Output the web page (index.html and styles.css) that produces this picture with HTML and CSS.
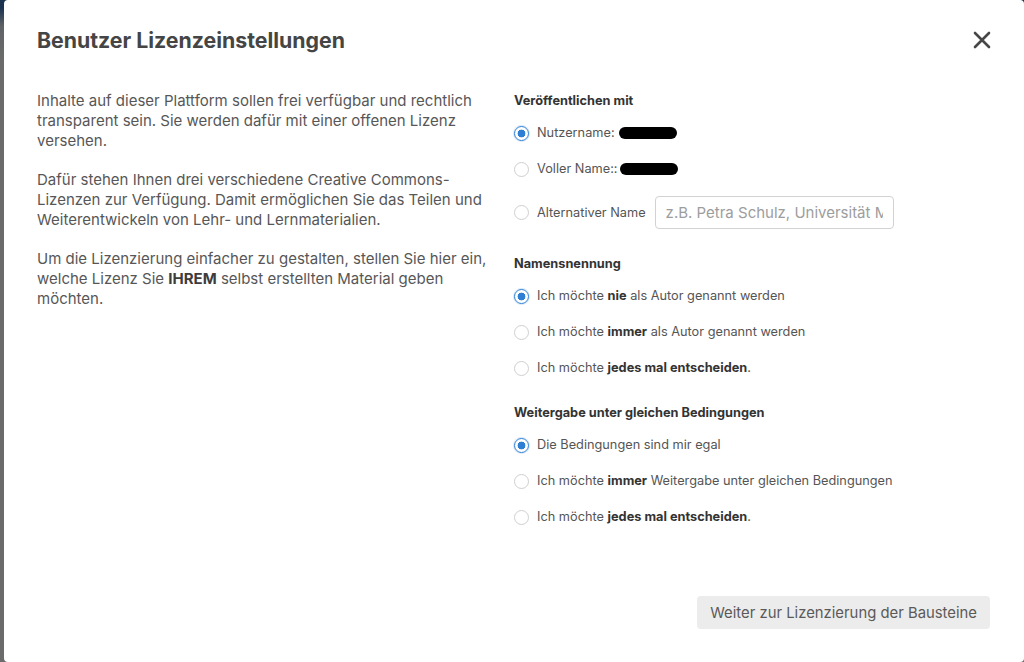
FILE: index.html
```html
<!DOCTYPE html>
<html lang="de">
<head>
<meta charset="utf-8">
<title>Benutzer Lizenzeinstellungen</title>
<link rel="stylesheet" href="styles.css">
</head>
<body>
<div class="modal">
  <header class="modal-header">
    <h1 class="modal-title">Benutzer Lizenzeinstellungen</h1>
    <button class="close-btn" aria-label="Schließen">
      <svg width="18" height="18" viewBox="0 0 18 18"><path d="M2 2 L16 16 M16 2 L2 16" stroke="#474747" stroke-width="2.6" stroke-linecap="round" fill="none"/></svg>
    </button>
  </header>
  <main class="modal-body">
    <section class="intro">
      <p>Inhalte auf dieser Plattform sollen frei verfügbar und rechtlich transparent sein. Sie werden dafür mit einer offenen Lizenz versehen.</p>
      <p>Dafür stehen Ihnen drei verschiedene Creative Commons-Lizenzen zur Verfügung. Damit ermöglichen Sie das Teilen und Weiterentwickeln von Lehr- und Lernmaterialien.</p>
      <p>Um die Lizenzierung einfacher zu gestalten, stellen Sie hier ein, welche Lizenz Sie <b>IHREM</b> selbst erstellten Material geben möchten.</p>
    </section>
    <section class="settings">
      <div class="group">
        <div class="group-title">Veröffentlichen mit</div>
        <label class="opt"><input type="radio" name="pub" checked><span>Nutzername:</span><span class="redact"></span></label>
        <label class="opt"><input type="radio" name="pub"><span>Voller Name::</span><span class="redact redact-2"></span></label>
        <label class="opt opt-input"><input type="radio" name="pub"><span>Alternativer Name</span><input class="text-input" type="text" placeholder="z.B. Petra Schulz, Universität Musterstadt"></label>
      </div>
      <div class="group">
        <div class="group-title">Namensnennung</div>
        <label class="opt"><input type="radio" name="by" checked><span>Ich möchte <b>nie</b> als Autor genannt werden</span></label>
        <label class="opt"><input type="radio" name="by"><span>Ich möchte <b>immer</b> als Autor genannt werden</span></label>
        <label class="opt"><input type="radio" name="by"><span>Ich möchte <b>jedes mal entscheiden</b>.</span></label>
      </div>
      <div class="group group-last">
        <div class="group-title">Weitergabe unter gleichen Bedingungen</div>
        <label class="opt"><input type="radio" name="sa" checked><span>Die Bedingungen sind mir egal</span></label>
        <label class="opt"><input type="radio" name="sa"><span>Ich möchte <b>immer</b> Weitergabe unter gleichen Bedingungen</span></label>
        <label class="opt"><input type="radio" name="sa"><span>Ich möchte <b>jedes mal entscheiden</b>.</span></label>
      </div>
    </section>
  </main>
  <footer class="modal-footer">
    <button class="next-btn">Weiter zur Lizenzierung der Bausteine</button>
  </footer>
</div>
</body>
</html>
```

FILE: styles.css
```css
* { box-sizing: border-box; }
html, body { height: 100%; }
body {
  margin: 0;
  background: linear-gradient(to bottom, #1c3350 0, #1c3350 8px, #5f6266 26px, #6b6b6b 60px, #6b6b6b 100%);
  font-family: Inter, "Noto Sans", "Liberation Sans", sans-serif;
  overflow: hidden;
}
.modal {
  margin-left: 4px;
  height: 662px;
  background: #fff;
  border-radius: 4px;
  display: flex;
  flex-direction: column;
}
.modal-header {
  height: 80px;
  display: flex;
  align-items: center;
  justify-content: space-between;
  padding: 0 33px 0 33px;
}
.modal-title {
  margin: 0;
  font-size: 21.3px;
  font-weight: 700;
  color: #454545;
}
.close-btn {
  background: none;
  border: 0;
  padding: 0;
  width: 18px;
  height: 18px;
  display: flex;
  cursor: pointer;
}
.modal-body {
  flex: 1;
  display: grid;
  grid-template-columns: 460px 1fr;
  column-gap: 17px;
  padding: 11px 34px 0 33px;
}
.intro p {
  margin: 0 0 19px;
  font-size: 15px;
  line-height: 20px;
  color: #575757;
}
.intro b { color: #3c3c3c; font-weight: 700; }
.settings {
  display: flex;
  flex-direction: column;
  font-size: 12.75px;
  color: #555;
}
.group { display: flex; flex-direction: column; margin-bottom: 25px; }
.group-title {
  font-weight: 700;
  color: #333;
  line-height: 20px;
  margin-bottom: 12px;
}
.opt {
  display: flex;
  align-items: center;
  height: 20px;
  margin-bottom: 16px;
  line-height: 20px;
}
.opt:last-child { margin-bottom: 0; }
.opt b { color: #333; font-weight: 700; }
.opt-input { height: 33px; margin-top: 1px; }
.opt input[type="radio"] {
  appearance: none;
  -webkit-appearance: none;
  margin: 0 8px 0 0;
  width: 15px;
  height: 15px;
  border: 1px solid #cfcfcf;
  border-radius: 50%;
  background: #fff;
  flex: none;
}
.opt input[type="radio"]:checked {
  border: 1.5px solid #2e7fd3;
  background: radial-gradient(circle, #2e7fd3 0, #2e7fd3 3.6px, #fff 4.2px);
  box-shadow: 0 0 0 1px rgba(46,127,211,0.18);
}
.redact {
  display: inline-block;
  width: 58px;
  height: 12px;
  border-radius: 6px;
  background: #000;
  margin-left: 4px;
}
.redact-2 { margin-left: 2px; }
.text-input {
  margin-left: 9px;
  width: 239px;
  height: 33px;
  border: 1px solid #d2d2d2;
  border-radius: 4px;
  padding: 0 10px;
  font-family: inherit;
  font-size: 15px;
  color: #555;
  outline: none;
}
.text-input::placeholder { color: #9d9d9d; }
.modal-footer {
  display: flex;
  justify-content: flex-end;
  padding: 0 34px 33px 0;
}
.next-btn {
  height: 33px;
  padding: 0 13px;
  border: 0;
  border-radius: 4px;
  background: #edecec;
  color: #5a5a5a;
  font-family: inherit;
  font-size: 14.85px;
  cursor: pointer;
}
```
